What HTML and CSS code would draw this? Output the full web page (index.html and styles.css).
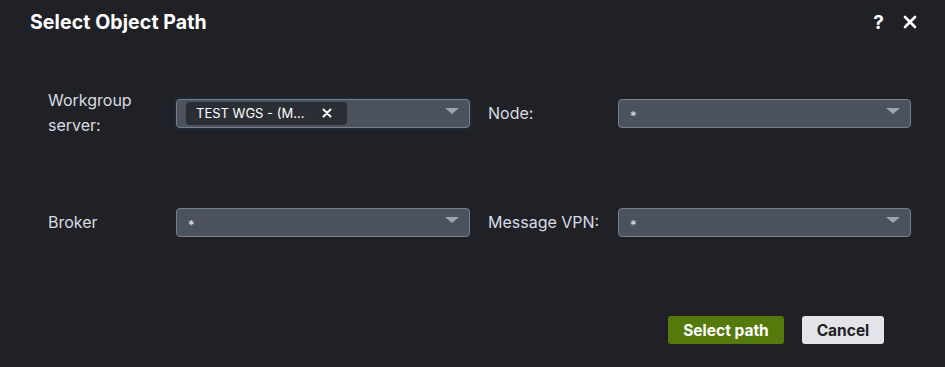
FILE: index.html
```html
<!DOCTYPE html>
<html lang="en">
<head>
<meta charset="utf-8">
<title>Select Object Path</title>
<link rel="stylesheet" href="styles.css">
</head>
<body>
<div class="dialog">
  <header class="header">
    <h1 class="title">Select Object Path</h1>
    <div class="header-actions">
      <span class="help">?</span>
      <svg class="close" width="14" height="14" viewBox="0 0 14 14"><path d="M2 2 L12 12 M12 2 L2 12" stroke="#ffffff" stroke-width="2.6" stroke-linecap="round"/></svg>
    </div>
  </header>
  <form class="form">
    <label class="label">Workgroup<br>server:</label>
    <div class="select focused">
      <span class="chip"><span class="chip-text">TEST WGS - (M...</span><svg class="chip-x" width="10" height="10" viewBox="0 0 10 10"><path d="M1.5 1.5 L8.5 8.5 M8.5 1.5 L1.5 8.5" stroke="#ffffff" stroke-width="2" stroke-linecap="round"/></svg></span>
      <span class="arrow"></span>
    </div>
    <label class="label right">Node:</label>
    <div class="select"><span class="value">*</span><span class="arrow"></span></div>

    <label class="label">Broker</label>
    <div class="select"><span class="value">*</span><span class="arrow"></span></div>
    <label class="label right">Message VPN:</label>
    <div class="select"><span class="value">*</span><span class="arrow"></span></div>
  </form>
  <footer class="footer">
    <button class="btn primary" type="button">Select path</button>
    <button class="btn secondary" type="button">Cancel</button>
  </footer>
</div>
</body>
</html>
```
FILE: styles.css
```css
html, body {
  margin: 0;
  padding: 0;
  background: #202126;
  font-family: Inter, "Liberation Sans", sans-serif;
  color: #dcdfe4;
}
.dialog {
  width: 945px;
  height: 367px;
  box-sizing: border-box;
}
.header {
  height: 44px;
  display: flex;
  align-items: center;
  justify-content: space-between;
  padding: 0 28px 0 30px;
}
.title {
  margin: 0;
  font-size: 19.5px;
  font-weight: 700;
  color: #ffffff;
  letter-spacing: 0.1px;
}
.header-actions {
  display: flex;
  align-items: center;
  gap: 19px;
}
.help {
  font-size: 19px;
  font-weight: 700;
  color: #ffffff;
  line-height: 1;
}
.close { display: block; }
.form {
  display: grid;
  grid-template-columns: 128px 294px 148px 293px;
  grid-template-rows: 50px 30px;
  row-gap: 69px;
  align-items: center;
  margin: 44px 0 0 48px;
}
.label {
  font-size: 16px;
  line-height: 25px;
  color: #d9dce2;
}
.label.right { padding-left: 18px; }
.select {
  height: 29px;
  box-sizing: border-box;
  background: #4b525d;
  border: 1px solid #787f8c;
  border-radius: 4px;
  display: flex;
  align-items: center;
  position: relative;
  padding-left: 9px;
}
.select.focused {
  box-shadow: 0 0 0 2px #1c2939;
}
.value {
  font-size: 13px;
  color: #e6e8ec;
  margin-top: 5px;
  margin-left: 2px;
}
.arrow {
  position: absolute;
  right: 10px;
  top: 8px;
  width: 0;
  height: 0;
  border-left: 7px solid transparent;
  border-right: 7px solid transparent;
  border-top: 6px solid #a0a4ac;
}
.chip {
  width: 161px;
  height: 23px;
  box-sizing: border-box;
  background: #2b2e35;
  border-radius: 4px;
  display: flex;
  align-items: center;
  padding: 0 15px 0 10px;
  justify-content: space-between;
}
.chip-text {
  font-size: 13px;
  color: #ffffff;
  white-space: nowrap;
}
.chip-x { display: block; }
.footer {
  display: flex;
  justify-content: flex-end;
  gap: 18px;
  margin-top: 79px;
  padding-right: 61px;
}
.btn {
  height: 28px;
  border: none;
  border-radius: 3px;
  font-family: Inter, "Liberation Sans", sans-serif;
  font-size: 15.5px;
  font-weight: 700;
  padding: 0;
}
.primary {
  width: 116px;
  background: #537a0b;
  color: #ffffff;
}
.secondary {
  width: 82px;
  background: #e3e4e8;
  color: #1e2026;
}
```
